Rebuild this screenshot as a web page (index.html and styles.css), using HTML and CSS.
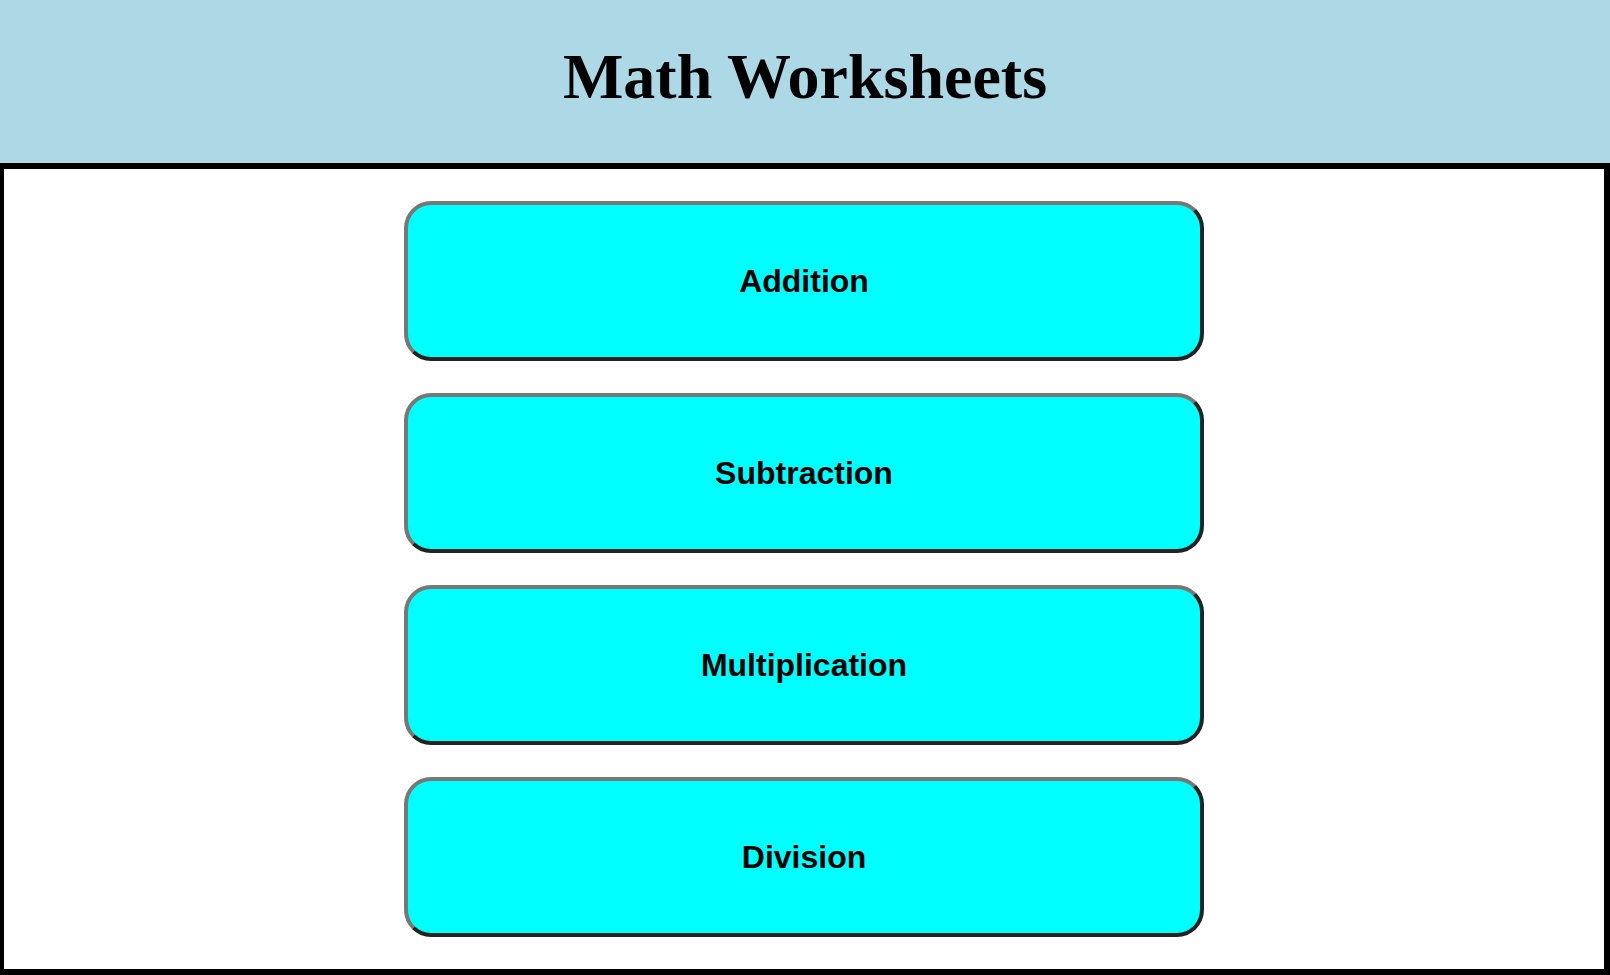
FILE: index.html
```html
<!DOCTYPE html>
<html lang="en">
<head>
<meta charset="utf-8">
<title>Math Worksheets</title>
<link rel="stylesheet" href="styles.css">
</head>
<body>
<header class="site-header">
  <h1 class="title">Math Worksheets</h1>
</header>
<main class="menu">
  <button class="menu-btn" type="button">Addition</button>
  <button class="menu-btn" type="button">Subtraction</button>
  <button class="menu-btn" type="button">Multiplication</button>
  <button class="menu-btn" type="button">Division</button>
</main>
</body>
</html>
```
FILE: styles.css
```css
html, body {
  margin: 0;
  padding: 0;
}

body {
  width: 1610px;
  height: 975px;
  overflow: hidden;
  background: #ffffff;
  font-family: "Liberation Sans", Arial, sans-serif;
}

.site-header {
  box-sizing: border-box;
  height: 163px;
  padding-top: 40px;
  background: #add8e6;
  text-align: center;
}

.title {
  margin: 0;
  font-family: "Liberation Serif", "Times New Roman", serif;
  font-weight: bold;
  font-size: 64px;
  line-height: 74px;
  color: #000;
}

.menu {
  box-sizing: border-box;
  height: 812px;
  border-style: solid;
  border-color: #000;
  border-width: 6px 6px 6px 4px;
  padding: 32px 0;
  display: flex;
  flex-direction: column;
  align-items: center;
  gap: 32px;
}

.menu-btn {
  box-sizing: border-box;
  width: 800px;
  height: 160px;
  flex: none;
  margin: 0;
  padding: 0;
  background: #00ffff;
  border: 4px solid;
  border-color: #777777 #222222 #222222 #777777;
  border-radius: 27px;
  font-family: "Liberation Sans", Arial, sans-serif;
  font-weight: bold;
  font-size: 32px;
  color: #000;
  display: flex;
  align-items: center;
  justify-content: center;
  cursor: pointer;
}
```
